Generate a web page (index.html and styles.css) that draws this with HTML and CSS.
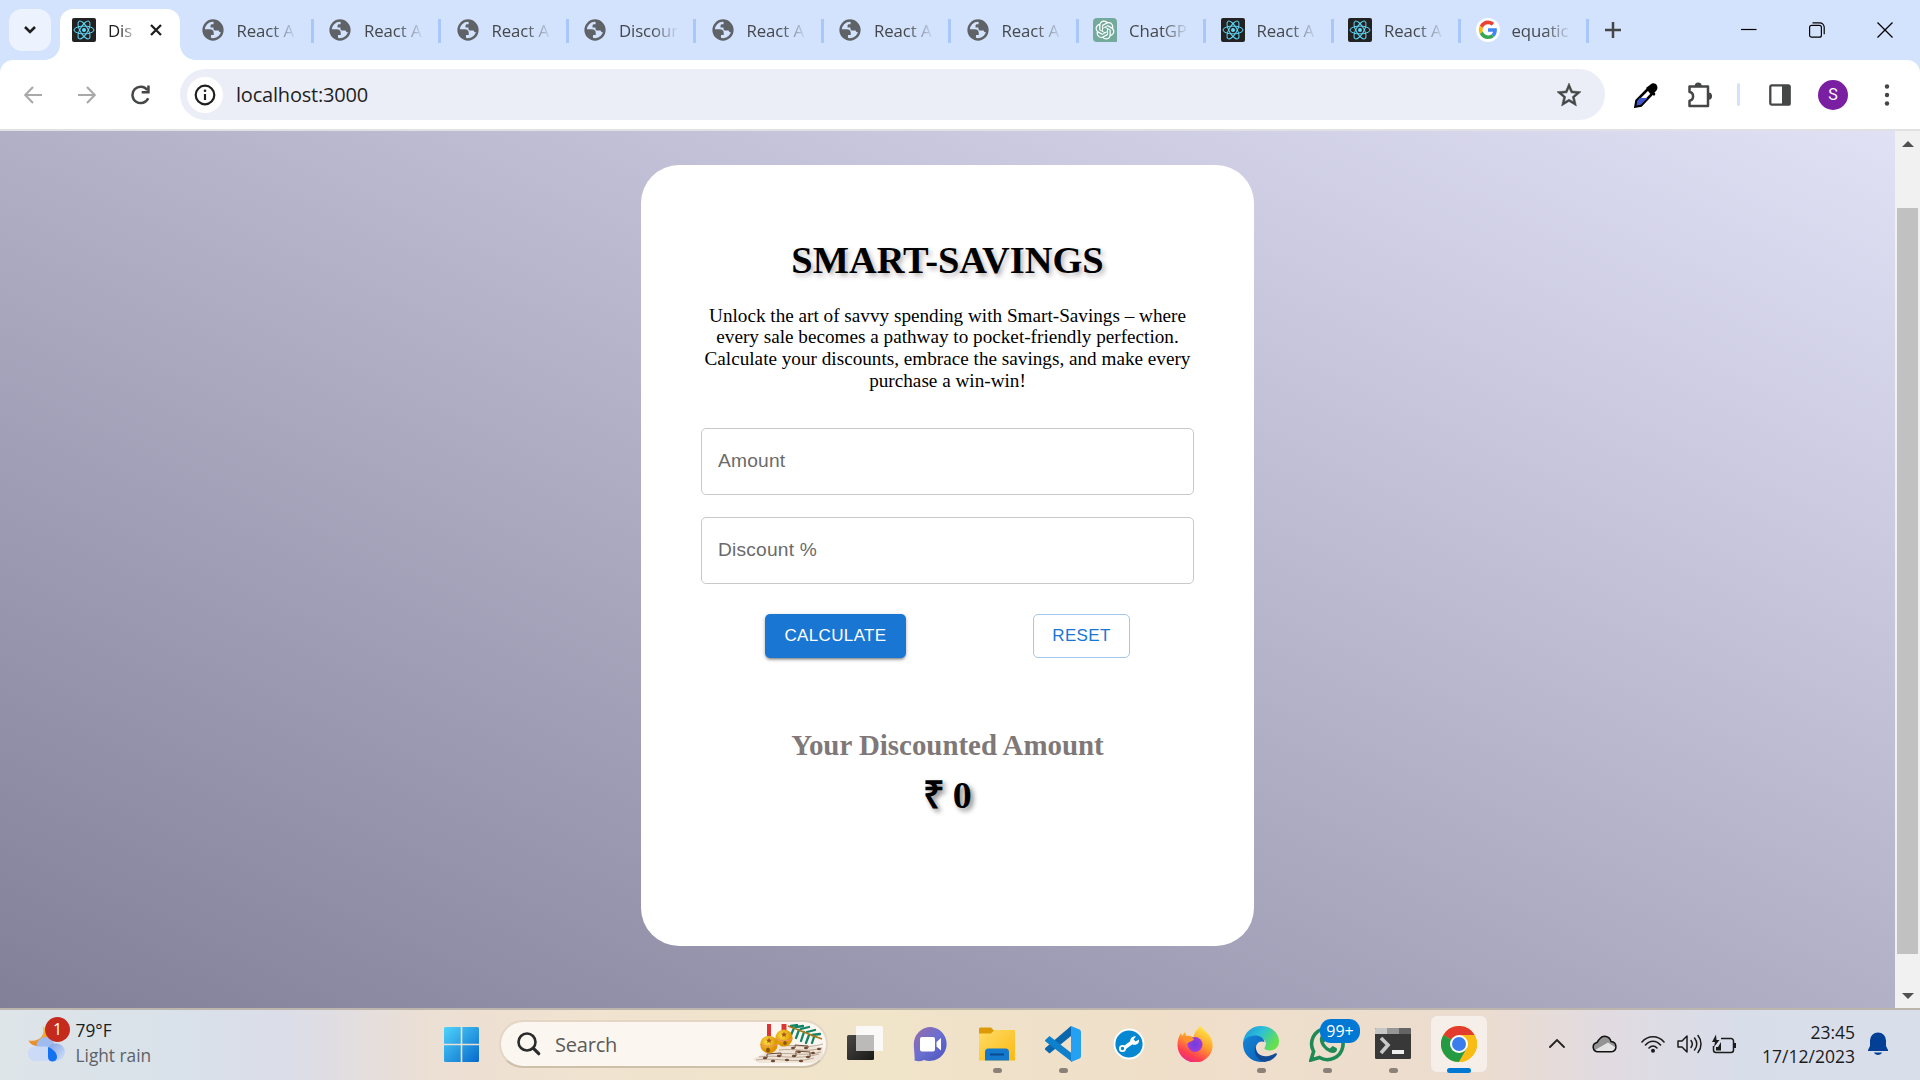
FILE: index.html
```html
<!DOCTYPE html>
<html lang="en">
<head>
<meta charset="utf-8">
<title>Discount Calculator</title>
<link rel="stylesheet" href="styles.css">
</head>
<body>
<svg class="defs" aria-hidden="true">
  <defs>
    <linearGradient id="win" x1="0" y1="0" x2="1" y2="1"><stop offset="0" stop-color="#4fd3fb"/><stop offset="1" stop-color="#0669cc"/></linearGradient>
    <linearGradient id="folder" x1="0" y1="0" x2="1" y2="1"><stop offset="0" stop-color="#ffdc68"/><stop offset="1" stop-color="#fbb911"/></linearGradient>
    <linearGradient id="chat" x1="0" y1="0" x2="1" y2="1"><stop offset="0" stop-color="#9a6ba8"/><stop offset=".5" stop-color="#6a6fd0"/><stop offset="1" stop-color="#4b53bc"/></linearGradient>
    <linearGradient id="moon" x1="0" y1="0" x2="0" y2="1"><stop offset="0" stop-color="#f8c84a"/><stop offset="1" stop-color="#e8862a"/></linearGradient>
    <linearGradient id="cloud" x1="0" y1="0" x2="1" y2="1"><stop offset="0" stop-color="#7f9fe2"/><stop offset="1" stop-color="#d3e2fa"/></linearGradient>
    <linearGradient id="edgeTop" x1="0" y1="0" x2="1" y2=".5"><stop offset="0" stop-color="#1a8fdc"/><stop offset=".5" stop-color="#2cc0d8"/><stop offset="1" stop-color="#66e04e"/></linearGradient>
    <linearGradient id="edgeBody" x1="0" y1="0" x2="1" y2="1"><stop offset="0" stop-color="#1486d8"/><stop offset="1" stop-color="#0c5fb5"/></linearGradient>
    <linearGradient id="fox" x1=".8" y1="0" x2=".3" y2="1"><stop offset="0" stop-color="#fff04a"/><stop offset=".45" stop-color="#ffa02c"/><stop offset=".8" stop-color="#ff4050"/><stop offset="1" stop-color="#e8288c"/></linearGradient>
    <radialGradient id="foxCore"><stop offset="0" stop-color="#6a3fe0"/><stop offset="1" stop-color="#a33bd6"/></radialGradient>
    <radialGradient id="bellGold" cx=".4" cy=".35"><stop offset="0" stop-color="#ffe048"/><stop offset="1" stop-color="#dd9600"/></radialGradient>
    <linearGradient id="dark" x1="0" y1="0" x2="1" y2="1"><stop offset="0" stop-color="#4a4846"/><stop offset="1" stop-color="#191919"/></linearGradient>
    <symbol id="globe" viewBox="0 0 24 24">
      <circle cx="12" cy="12" r="10.3" fill="none" stroke="#5f6368" stroke-width="2.6"/>
      <path fill="#5f6368" d="M12.5 1.5C18 2 22.500 6 22.500 12l-1.500 2.500c-1.500 0-2.500-.5-3-2h-3.500c-1.200 0-2-.8-2-2V9.300H9.300V7.200c0-1 .7-1.600 1.700-1.600h1.700zM1.800 11.200h6.700c2.800 0 4.300 1.500 4.300 3.700v2.500H9.800v5.100C5 21.500 1.800 17 1.800 12z"/>
    </symbol>
    <symbol id="react" viewBox="0 0 24 24">
      <rect width="24" height="24" rx="2" fill="#222"/>
      <g fill="none" stroke="#61dafb" stroke-width="1"><ellipse cx="12" cy="12" rx="10" ry="3.900"/><ellipse cx="12" cy="12" rx="10" ry="3.900" transform="rotate(60 12 12)"/><ellipse cx="12" cy="12" rx="10" ry="3.900" transform="rotate(120 12 12)"/></g>
      <circle cx="12" cy="12" r="2" fill="#61dafb"/>
    </symbol>
  </defs>
</svg>

<header class="tabstrip">
  <button class="tabsearch" aria-label="Search tabs"><svg width="14" height="10" viewBox="0 0 14 10"><path d="M2 2l5 5 5-5" fill="none" stroke="#1f1f1f" stroke-width="2.600"/></svg></button>
  <div class="tab tab-active"><svg class="favicon"><use href="#react"/></svg><span class="tab-title">Dis</span><svg class="close" width="12" height="12" viewBox="0 0 12 12"><path d="M1 1l10 10M11 1L1 11" stroke="#1f1f1f" stroke-width="2.300"/></svg></div>
  <div class="tabs">
    <div class="tab"><svg class="favicon globe"><use href="#globe"/></svg><span class="tab-title">React A</span></div>
    <div class="tab"><svg class="favicon globe"><use href="#globe"/></svg><span class="tab-title">React A</span></div>
    <div class="tab"><svg class="favicon globe"><use href="#globe"/></svg><span class="tab-title">React A</span></div>
    <div class="tab"><svg class="favicon globe"><use href="#globe"/></svg><span class="tab-title">Discour</span></div>
    <div class="tab"><svg class="favicon globe"><use href="#globe"/></svg><span class="tab-title">React A</span></div>
    <div class="tab"><svg class="favicon globe"><use href="#globe"/></svg><span class="tab-title">React A</span></div>
    <div class="tab"><svg class="favicon globe"><use href="#globe"/></svg><span class="tab-title">React A</span></div>
    <div class="tab"><svg class="favicon" viewBox="0 0 24 24"><path d="M4 0h16a4 4 0 0 1 4 4v20H4a4 4 0 0 1-4-4V4a4 4 0 0 1 4-4z" fill="#74aa9c"/><path transform="translate(2.500 2.500) scale(.79)" fill="#fff" d="M22.2819 9.8211a5.9847 5.9847 0 0 0-.5157-4.9108 6.0462 6.0462 0 0 0-6.5098-2.9A6.0651 6.0651 0 0 0 4.9807 4.1818a5.9847 5.9847 0 0 0-3.9977 2.9 6.0462 6.0462 0 0 0 .7427 7.0966 5.98 5.98 0 0 0 .511 4.9107 6.051 6.051 0 0 0 6.5146 2.9001A5.9847 5.9847 0 0 0 13.2599 24a6.0557 6.0557 0 0 0 5.7718-4.2058 5.9894 5.9894 0 0 0 3.9977-2.9001 6.0557 6.0557 0 0 0-.7475-7.0729zm-9.022 12.6081a4.4755 4.4755 0 0 1-2.8764-1.0408l.1419-.0804 4.7783-2.7582a.7948.7948 0 0 0 .3927-.6813v-6.7369l2.02 1.1686a.071.071 0 0 1 .038.052v5.5826a4.504 4.504 0 0 1-4.4945 4.4944zm-9.6607-4.1254a4.4708 4.4708 0 0 1-.5346-3.0137l.142.0852 4.783 2.7582a.7712.7712 0 0 0 .7806 0l5.8428-3.3685v2.3324a.0804.0804 0 0 1-.0332.0615L9.74 19.9502a4.4992 4.4992 0 0 1-6.1408-1.6464zM2.3408 7.8956a4.485 4.485 0 0 1 2.3655-1.9728V11.6a.7664.7664 0 0 0 .3879.6765l5.8144 3.3543-2.0201 1.1685a.0757.0757 0 0 1-.071 0l-4.8303-2.7865A4.504 4.504 0 0 1 2.3408 7.872zm16.5963 3.8558L13.1038 8.364 15.1192 7.2a.0757.0757 0 0 1 .071 0l4.8303 2.7913a4.4944 4.4944 0 0 1-.6765 8.1042v-5.6772a.79.79 0 0 0-.407-.667zm2.0107-3.0231l-.142-.0852-4.7735-2.7818a.7759.7759 0 0 0-.7854 0L9.409 9.2297V6.8974a.0662.0662 0 0 1 .0284-.0615l4.8303-2.7866a4.4992 4.4992 0 0 1 6.6802 4.66zM8.3065 12.863l-2.02-1.1638a.0804.0804 0 0 1-.038-.0567V6.0742a4.4992 4.4992 0 0 1 7.3757-3.4537l-.142.0805L8.704 5.459a.7948.7948 0 0 0-.3927.6813zm1.0976-2.3654l2.602-1.4998 2.6069 1.4998v2.9994l-2.5974 1.4997-2.6067-1.4997Z"/></svg><span class="tab-title">ChatGP</span></div>
    <div class="tab"><svg class="favicon"><use href="#react"/></svg><span class="tab-title">React A</span></div>
    <div class="tab"><svg class="favicon"><use href="#react"/></svg><span class="tab-title">React A</span></div>
    <div class="tab"><svg class="favicon" viewBox="0 0 24 24"><circle cx="12" cy="12" r="12" fill="#fff"/><g transform="translate(2.800 2.600) scale(.385)"><path fill="#EA4335" d="M24 9.500c3.540 0 6.710 1.220 9.210 3.600l6.850-6.850C35.900 2.380 30.470 0 24 0 14.620 0 6.510 5.380 2.560 13.220l7.980 6.190C12.430 13.720 17.740 9.500 24 9.500z"/><path fill="#4285F4" d="M46.980 24.550c0-1.570-.15-3.090-.38-4.550H24v9.020h12.940c-.58 2.960-2.260 5.480-4.780 7.180l7.730 6c4.510-4.180 7.090-10.360 7.090-17.650z"/><path fill="#FBBC05" d="M10.530 28.590A14.500 14.500 0 0 1 9.770 24c0-1.600.27-3.140.76-4.590l-7.980-6.190A23.900 23.900 0 0 0 0 24c0 3.880.92 7.540 2.560 10.780z"/><path fill="#34A853" d="M24 48c6.480 0 11.930-2.130 15.890-5.810l-7.730-6C30 37.640 27.240 38.490 24 38.490c-6.260 0-11.570-4.220-13.470-9.910l-7.980 6.190C6.510 42.620 14.620 48 24 48z"/></g></svg><span class="tab-title">equatic</span></div>
  </div>
  <svg class="newtab" width="16" height="16" viewBox="0 0 16 16"><path d="M8 0v16M0 8h16" stroke="#444746" stroke-width="2.500"/></svg>
  <div class="window-controls">
    <svg width="16" height="16" viewBox="0 0 16 16"><path d="M0 7.500h15.500" stroke="#000" stroke-width="1.200"/></svg>
    <svg width="16" height="16" viewBox="0 0 16 16"><g fill="none" stroke="#000" stroke-width="1.200"><rect x=".6" y="3.400" width="11.800" height="11.800" rx="2"/><path d="M3.500.8h7.200a4.500 4.500 0 0 1 4.500 4.500v7"/></g></svg>
    <svg width="16" height="16" viewBox="0 0 16 16"><path d="M.5.5l15 15M15.500.5l-15 15" stroke="#000" stroke-width="1.300"/></svg>
  </div>
</header>

<nav class="toolbar-wrap">
 <div class="toolbar">
  <svg class="nav-icon" width="18" height="18" viewBox="0 0 18 18"><path d="M18 9H1.500M9 1L1.200 9 9 17" fill="none" stroke="#a9a9a9" stroke-width="2.100"/></svg>
  <svg class="nav-icon" width="18" height="18" viewBox="0 0 18 18"><path d="M0 9h16.500M9 1l7.800 8L9 17" fill="none" stroke="#a9a9a9" stroke-width="2.100"/></svg>
  <svg class="nav-icon reload" width="20" height="20" viewBox="0 0 20 20"><path d="M17.200 13.200A8.200 8.200 0 1 1 16.300 5" fill="none" stroke="#444746" stroke-width="2.500"/><path d="M18.700.5v8h-8V6h5.500V.5z" fill="#444746"/></svg>
  <div class="omnibox">
    <span class="site-info"><svg width="22" height="22" viewBox="0 0 22 22"><circle cx="11" cy="11" r="9.300" fill="none" stroke="#1f1f1f" stroke-width="2.200"/><path d="M11 10v6" stroke="#1f1f1f" stroke-width="2.200"/><circle cx="11" cy="6.800" r="1.300" fill="#1f1f1f"/></svg></span>
    <span class="url">localhost:3000</span>
    <svg width="24" height="24" viewBox="0 0 24 24"><path fill="#444746" stroke="#444746" stroke-width=".5" d="M24 8.740l-8.630-.74L12 0 8.630 8.010 0 8.740l6.550 5.680L4.580 23 12 18.450 19.420 23l-1.960-8.580L24 8.740zm-12 7.410l-4.510 2.720 1.200-5.130-3.980-3.450 5.250-.46L12 4.980l2.050 4.840 5.250.46-3.980 3.450 1.200 5.130L12 16.150z"/></svg>
  </div>
  <svg class="ext pipette" width="24" height="26" viewBox="0 0 24 26"><path d="M14 7L2.500 18.500 1.500 24.500 7 23.500 18 12z" fill="#fff" stroke="#000" stroke-width="2.600"/><path d="M5.500 16h8l-6.500 6.500-4.500 1 .8-4.500z" fill="#3c55c8"/><path d="M12 6l8 8 1.500-2-1-1.500c3-2 3.500-5 2.500-7C21.500.8 18 .5 16 3l-1.500 1z" fill="#000"/></svg>
  <svg class="ext puzzle" width="25" height="26" viewBox="0 0 25 26"><path d="M2.500 4.500h18.500v19.500H2.500v-5.200c4.800-.7 4.800-8.200 0-8.900z" fill="none" stroke="#444746" stroke-width="2.500" stroke-linejoin="round"/><path d="M7.700 4a3.500 3.500 0 0 1 7 0zM21.500 10.500a3.600 3.600 0 0 1 0 7.200z" fill="#444746"/></svg>
  <i class="divider"></i>
  <svg class="ext panel" width="22" height="22" viewBox="0 0 22 22"><rect x="1.300" y="1.300" width="19.400" height="19.400" rx="1.500" fill="none" stroke="#444746" stroke-width="2.300"/><path d="M13 1h8v20h-8z" fill="#444746"/></svg>
  <span class="avatar">S</span>
  <svg class="ext dots" width="6" height="22" viewBox="0 0 6 22"><g fill="#444746"><circle cx="3" cy="2.500" r="2.200"/><circle cx="3" cy="11" r="2.200"/><circle cx="3" cy="19.500" r="2.200"/></g></svg>
 </div>
</nav>

<div class="viewport">
  <main class="page">
    <section class="card">
      <h1>SMART-SAVINGS</h1>
      <p class="intro">Unlock the art of savvy spending with Smart-Savings – where every sale becomes a pathway to pocket-friendly perfection. Calculate your discounts, embrace the savings, and make every purchase a win-win!</p>
      <div class="field">Amount</div>
      <div class="field">Discount %</div>
      <div class="actions"><button class="btn primary">CALCULATE</button><button class="btn outlined">RESET</button></div>
      <h2>Your Discounted Amount</h2>
      <div class="result">₹ 0</div>
    </section>
  </main>
  <aside class="scrollbar">
    <svg width="12" height="6" viewBox="0 0 12 6"><path d="M0 6l6-6 6 6z" fill="#505050"/></svg>
    <div class="track"><div class="thumb"></div></div>
    <svg width="12" height="6" viewBox="0 0 12 6"><path d="M0 0l6 6 6-6z" fill="#505050"/></svg>
  </aside>
</div>

<footer class="taskbar">
  <div class="weather">
    <span class="weather-icon"><svg width="38" height="38" viewBox="0 0 38 38"><path d="M14.500 1c3 9-2 16-14 14.500C4 24 17 22 19.500 13 20.500 8 18 3 14.500 1z" fill="url(#moon)"/><circle cx="17.500" cy="21" r="9" fill="#9fbbef"/><circle cx="28" cy="27" r="8.800" fill="url(#cloud)"/><path d="M7 21.500h10.500c3 0 5 2 6 5v9.500H7a7.200 7.200 0 0 1 0-14.500z" fill="#cbdaf6"/><path d="M20 22v10c0 6 9 6 9 0 0-4-4-8-9-10z" fill="#1272f2"/></svg><b class="badge-red">1</b></span>
    <span class="weather-text"><span>79°F</span><span class="muted">Light rain</span></span>
  </div>
  <div class="center">
    <svg class="start" width="35" height="35" viewBox="0 0 35 35"><path fill="url(#win)" d="M1.500 0H16.700v16.700H0V1.500A1.500 1.500 0 0 1 1.500 0zM18.300 0h15.200A1.500 1.500 0 0 1 35 1.500v15.200H18.300zM0 18.300h16.700V35H1.500A1.500 1.500 0 0 1 0 33.500zM18.300 18.300H35v15.200a1.500 1.500 0 0 1-1.500 1.500H18.300z"/></svg>
    <div class="search">
      <svg width="24" height="24" viewBox="0 0 24 24"><circle cx="10" cy="10" r="8.500" fill="none" stroke="#2b2b2b" stroke-width="2.600"/><path d="M16.200 16.200l5.500 5.500" stroke="#2b2b2b" stroke-width="3.200" stroke-linecap="round"/></svg>
      <span>Search</span>
      <svg class="art" width="72" height="40" viewBox="0 0 72 40"><path d="M0 35l28-14 42 2v10l-10 6H6z" fill="#efe5d8"/>
        <g stroke="#a68d7a" stroke-width=".7" fill="none"><path d="M3 36c22-3 38 4 58-2M6 33c20-3 36 4 60-3M26 26c16-2 26 3 43-2M28 22c16-2 26 3 42-2M24 30c16-2 26 3 44-2"/></g>
        <g fill="#6e4a35"><ellipse cx="12" cy="34" rx="2.200" ry="1.200"/><ellipse cx="20" cy="37" rx="2.200" ry="1.200"/><ellipse cx="26" cy="32" rx="2.200" ry="1.200"/><ellipse cx="34" cy="36" rx="2.200" ry="1.200"/><ellipse cx="41" cy="32" rx="2.200" ry="1.200"/><ellipse cx="48" cy="37" rx="2.200" ry="1.200"/><ellipse cx="55" cy="33" rx="2.200" ry="1.200"/><ellipse cx="40" cy="24" rx="2" ry="1.200"/><ellipse cx="46" cy="28" rx="2" ry="1.200"/><ellipse cx="53" cy="24" rx="2" ry="1.200"/><ellipse cx="60" cy="29" rx="2" ry="1.200"/><ellipse cx="66" cy="25" rx="2" ry="1.200"/></g>
        <g stroke="#6e4a35" stroke-width="1" fill="none"><path d="M14 34v-4l14-1v3M43 32v-5l14 1v5M42 24v-3l13 1v2"/></g>
        <g stroke="#118466" stroke-width="2.300" stroke-linecap="round"><path d="M41 4l-3 7M46 6l-3 8M51 8l-3 9M56 11l-3 8M61 13l-2 6M43 3l7-1M48 5l8-2M54 8l8-2M59 11l8-1M38 2l6-1"/></g><path d="M35 2c12 4 22 9 34 13" stroke="#a9791c" stroke-width="1.700" fill="none"/>
        <path d="M14 0h4v12h-4zM28.500 0h5v7h-5z" fill="#dc3434"/><circle cx="31" cy="14" r="8.600" fill="url(#bellGold)"/><circle cx="16" cy="20.500" r="8.800" fill="url(#bellGold)"/>
        <path d="M7.500 20.500c5 2 12 2 17 0M22.500 15c5 2 12 2 17 0" stroke="#ee8e62" stroke-width="1.100" fill="none"/><path d="M16 13.500l.8 2 2.200.2-1.600 1.500.4 2.100-1.800-1.200-1.800 1.200.4-2.100-1.600-1.500 2.200-.2zM31 7.500l.8 2 2.200.2-1.600 1.500.4 2.100-1.800-1.200-1.800 1.200.4-2.100-1.600-1.500 2.200-.2z" fill="#a35a16"/><ellipse cx="15" cy="26" rx="2" ry="2.500" fill="#8a5510"/><ellipse cx="32" cy="19" rx="1.800" ry="2.100" fill="#8a5510"/>
      </svg>
    </div>
    <div class="apps">
      <div class="app"><svg width="36" height="36" viewBox="0 0 36 36"><rect x="0" y="9" width="27" height="25" rx="1.500" fill="url(#dark)"/><rect x="9" y="0" width="27" height="25" rx="1" fill="#fafafa" opacity=".94"/><path d="M9 9h18v16H9z" fill="#bcbab8"/></svg></div>
      <div class="app"><svg width="36" height="36" viewBox="0 0 36 36"><path d="M18 1a17 17 0 1 1-7 33c-3 1.500-6 1.500-9.500.6C2 30 .8 24 .8 18A17 17 0 0 1 18 1z" fill="url(#chat)"/><rect x="7" y="11" width="15" height="14.500" rx="2" fill="#fff"/><path d="M23.500 16l4.500-4v12.500l-4.500-4z" fill="#fff"/></svg></div>
      <div class="app running"><svg width="36" height="36" viewBox="0 0 36 36"><path d="M0 3a1.500 1.500 0 0 1 1.500-1.500H12L15.500 5 12 8H0z" fill="#dd9a07"/><path d="M0 7.500h12L15.500 4H36v30.500H0z" fill="url(#folder)"/><path d="M6 34.500V26a3.500 3.500 0 0 1 3.500-3.500h17A3.500 3.500 0 0 1 30 26v8.500z" fill="#1379cc"/><path d="M11 28.500h14" stroke="#084c8f" stroke-width="2"/></svg></div>
      <div class="app running"><svg width="36" height="36" viewBox="0 0 36 36"><path d="M26 0v10L4.500 27.500.5 24c-.7-.7-.7-1.500 0-2.200z" fill="#0b67ad"/><path d="M.5 13.700L4.500 10 27 27.500V36L.5 15.500c-.7-.6-.7-1.200 0-1.800z" fill="#0f80cc"/><path d="M26 0l8.500 3.500Q36 4 36 6v24q0 2-1.500 2.500L26 36z" fill="#26a0f2"/></svg></div>
      <div class="app"><svg width="32" height="32" viewBox="0 0 32 32"><circle cx="16" cy="16" r="14.500" fill="#0588d1" stroke="#fff" stroke-width="1.800"/><path d="M10.500 20.500L20 13.500" stroke="#fff" stroke-width="3.800"/><circle cx="9.500" cy="20.500" r="2.600" fill="#0588d1" stroke="#fff" stroke-width="1.800"/><path d="M26 11.500a4.500 4.500 0 0 1-8.700 2.200 4.500 4.500 0 0 1 5.700-5.200l-2.500 2.700 2 2.300z" fill="#fff"/></svg></div>
      <div class="app"><svg width="36" height="36" viewBox="0 0 36 36"><path d="M24 0c1 3 5 5 8 9 3 4 4 8 3.500 12.500A17.600 17.600 0 0 1 .5 20C.3 14 2 10 4 7l1 3 3-4 1.500 4c3-.5 5 0 7 1.500 1-6 4-9 7.500-11.500z" fill="url(#fox)"/><circle cx="18" cy="18.500" r="7.500" fill="url(#foxCore)"/><path d="M5 10.500c4-1 8-.5 12 2.500-1 3-5 2-6.500 4.500C8 16 6 14 5 10.500z" fill="#ff9228"/></svg></div>
      <div class="app running"><svg width="36" height="36" viewBox="0 0 36 36"><path d="M0 17C1 6 9 0 18 0c10 0 18 7 18 15 0 6-4 9.500-9.500 9.500-4 0-6-1.500-4.500-3.500 3-5-1-9.500-8-9.500C7 11.500 2 14 0 20z" fill="url(#edgeTop)"/><path d="M0 18c.5-5 6-8.500 12-8.500 5 0 9 2.500 9.500 6.500-5-2-9.500 2-8.500 8 1 6 5 10 9 11.500C9.500 38 0 29 0 18z" fill="url(#edgeBody)"/><path d="M13 20c-1 9 8 13.500 19 7.500 1.500-.7 2.400.4 1.600 1.500C31 33 27 35.300 21.500 36 14 34 9.500 26 13 20z" fill="#124a94"/></svg></div>
      <div class="app running"><svg width="36" height="36" viewBox="0 0 36 36"><path d="M2 34l2.600-8.500A15.700 15.700 0 1 1 10.500 31.500z" fill="none" stroke="#1d8a57" stroke-width="3.600"/><path d="M12.500 9.500c-5 4 2 16.500 11.500 17.500 3 0 5-3 3.500-5l-4-2-2.500 2.500c-3-1-5-3.500-6-6l2-2.500-2-4.500z" fill="#1d8a57"/></svg><b class="badge-blue">99+</b></div>
      <div class="app running"><svg width="36" height="32" viewBox="0 0 36 32"><rect width="36" height="31" rx="1.500" fill="#383838"/><path d="M0 1.500A1.500 1.500 0 0 1 1.500 0H12v6H0z" fill="#c7c7c7"/><path d="M12 0h12v6H12z" fill="#969696"/><path d="M24 0h10.500A1.500 1.500 0 0 1 36 1.500V6H24z" fill="#646464"/><path d="M6 10l7 7-7 8" fill="none" stroke="#c8c8c8" stroke-width="3.600"/><rect x="17" y="22" width="12" height="4" fill="#eee"/></svg></div>
      <div class="app running active"><svg width="36" height="36" viewBox="0 0 36 36"><circle cx="18" cy="18" r="18" fill="#f9bc15"/><path d="M18 18L2.400 9A18 18 0 0 1 33.600 9z" fill="#e33b2e"/><path d="M2.400 9a18 18 0 0 0 15.600 27l7.800-13.500L18 18z" fill="#249b43"/><path d="M18 9h15.600A18 18 0 0 1 18 36l7.800-13.500z" fill="#f9bc15"/><circle cx="18" cy="18" r="9" fill="#fff"/><circle cx="18" cy="18" r="7" fill="#3b7ded"/></svg></div>
    </div>
  </div>
  <div class="tray">
    <svg width="16" height="9" viewBox="0 0 16 9"><path d="M1 8l7-7 7 7" fill="none" stroke="#222" stroke-width="1.800" stroke-linecap="round"/></svg>
    <svg class="t-cloud" width="25" height="18" viewBox="0 0 25 18"><path d="M6 16.700C.3 16.700-.7 9 5 7.500 6.500 5 7 4.500 8 3.500c3-3.500 9.500-3 11 3 6.500.5 6.500 10.200.5 10.200z" fill="#949494"/><path d="M3 15l13-7.500 7.500 5-3 3.500-3 .5H5z" fill="#e3e3e3"/><path d="M6 16.700C.3 16.700-.7 9 5 7.500 6.500 5 7 4.500 8 3.500c3-3.500 9.500-3 11 3 6.500.5 6.500 10.200.5 10.200z" fill="none" stroke="#111" stroke-width="1.500"/></svg>
    <svg class="t-wifi" width="24" height="18" viewBox="0 0 24 18"><g fill="none" stroke="#1b1b1b" stroke-width="1.600" stroke-linecap="round"><path d="M1 7c6-7 16-7 22 0M4.500 10c4.500-5 10.500-5 15 0M8 13c2.500-2.700 5.500-2.700 8 0"/></g><circle cx="12" cy="15.700" r="2" fill="#1b1b1b"/></svg>
    <svg class="t-sound" width="25" height="20" viewBox="0 0 25 20"><g fill="none" stroke="#1b1b1b" stroke-width="1.500" stroke-linecap="round" stroke-linejoin="round"><path d="M1 7h4l5-5v16l-5-5H1zM14 6.500c1.500 2 1.500 5 0 7M17.500 4c3 3.500 3 8.500 0 12M21 1.500c4 5 4 12 0 17"/></g></svg>
    <svg class="t-bat" width="25" height="20" viewBox="0 0 25 20"><path d="M9 4.500h10a2.500 2.500 0 0 1 2.500 2.500v9a2.500 2.500 0 0 1-2.500 2.500H4A2.500 2.500 0 0 1 1.500 16v-4" fill="none" stroke="#1b1b1b" stroke-width="1.500"/><path d="M22 9h2v5h-2zM4 .5L0 8h3l-1 5 5.500-7H4.500zM4 13h2l3-5v8.500H4z" fill="#1b1b1b"/></svg>
    <div class="clock"><span>23:45</span><span>17/12/2023</span></div>
    <svg class="t-bell" width="20" height="24" viewBox="0 0 20 24"><path d="M10 .5a8 8 0 0 0-8 8V14L0 18v1h20v-1l-2-4V8.500a8 8 0 0 0-8-8zM6 20.500h8c-1 3.300-7 3.300-8 0z" fill="#033f94"/></svg>
  </div>
</footer>
</body>
</html>
```
FILE: styles.css
```css
* { box-sizing: border-box; }
body { margin: 0; width: 1920px; height: 1080px; overflow: hidden; display: flex; flex-direction: column; font-family: "Open Sans", "Noto Sans", sans-serif; }
svg { display: block; flex: none; }
button { border: 0; padding: 0; font: inherit; }
.defs { position: absolute; width: 0; height: 0; }

/* Tab strip */
.tabstrip { height: 60px; flex: none; background: #d3e3fd; display: flex; align-items: flex-start; padding-left: 9px; }
.tabsearch { width: 42px; height: 42px; margin-top: 9px; border-radius: 13px; background: #ecf3fe; display: flex; align-items: center; justify-content: center; }
.tab { display: flex; align-items: center; height: 42px; margin-top: 9px; width: 127.500px; padding-left: 14.500px; border-right: 3px solid transparent; border-image: linear-gradient(transparent 10px, #a8c7fa 10px, #a8c7fa 34px, transparent 34px) 0 3 0 0; }
.favicon { width: 24px; height: 24px; }
.favicon.globe { padding: 1px; }
.tab-title { width: 60px; margin-left: 12px; white-space: nowrap; font-size: 16.800px; color: #45484b; line-height: 24px; padding-top: 2px; letter-spacing: -.1px; mask-image: linear-gradient(90deg, #000 55%, transparent); }
.tab-active { position: relative; width: 120px; height: 51px; margin-left: 9px; padding: 0 0 9px 12px; border: 0; border-radius: 13px 13px 0 0; background: #fff; }
.tab-active .tab-title { width: 29px; color: #1f1f1f; mask-image: linear-gradient(90deg, #000 40%, transparent); }
.tab-active .close { margin-left: 13px; }
.tab-active::before, .tab-active::after { content: ""; position: absolute; bottom: 0; width: 15px; height: 15px; }
.tab-active::before { left: -15px; background: radial-gradient(circle at 0 0, transparent 14.500px, #fff 15px); }
.tab-active::after { right: -15px; background: radial-gradient(circle at 100% 0, transparent 14.500px, #fff 15px); }
.tabs { display: flex; margin-left: 6px; }
.newtab { margin: 22px 0 0 16px; }
.window-controls { display: flex; gap: 52px; margin: 22px 27px 0 auto; }

/* Toolbar */
.toolbar-wrap { height: 71px; flex: none; background: #d3e3fd; }
.toolbar { height: 71px; background: #fff; border-bottom: 2px solid #e0e1e2; border-radius: 13px 13px 0 0; display: flex; align-items: center; padding: 0 30px 0 24px; }
.nav-icon { margin-right: 36px; }
.reload { margin-left: -1px; }
.omnibox { width: 1425px; height: 51px; margin-left: -7px; border-radius: 26px; background: #eceef7; display: flex; align-items: center; padding: 0 24px 0 7px; }
.site-info { width: 36px; height: 36px; border-radius: 50%; background: #fff; display: flex; align-items: center; justify-content: center; }
.url { flex: 1; margin-left: 13px; font-size: 20px; color: #1f1f1f; letter-spacing: -.2px; }
.pipette { margin-left: 29px; }
.puzzle { margin-left: 29px; }
.divider { width: 3px; height: 23px; border-radius: 2px; background: #d3e3fd; margin-left: 25px; }
.panel { margin-left: 29px; }
.avatar { width: 30px; height: 30px; margin-left: 27px; border-radius: 50%; background: #7b1fa2; color: #fff; font: 16px/30px Roboto, sans-serif; text-align: center; }
.dots { margin-left: auto; }

/* Page */
.viewport { height: 877px; flex: none; display: flex; }
.page { width: 1895px; background: linear-gradient(to top right, #827f98, #e1e1f6); display: flex; justify-content: center; align-items: flex-start; padding-top: 34px; }
.card { width: 613px; height: 781px; padding: 61px 60px; border-radius: 38px; background: #fff; text-align: center; font-family: "Liberation Serif", serif; color: #000; }
h1 { margin: 10.500px 0 0; font-size: 38.400px; line-height: 46px; text-shadow: 2.500px 2.500px 5px #b9b2b2; }
.intro { margin: 22px -10px 0; padding: 0 10px; font-size: 19.200px; line-height: 21.800px; }
.field { height: 67px; border: 1px solid #c9c9c9; border-radius: 5px; margin-top: 22px; padding-left: 16px; text-align: left; font: 19.200px/63px "Liberation Sans", sans-serif; letter-spacing: .19px; color: #6a6a6a; }
.intro + .field { margin-top: 36px; }
.actions { display: flex; padding-left: 64px; gap: 127px; margin-top: 30px; }
.btn { height: 44px; border-radius: 5px; font: 17px/42px "Liberation Sans", sans-serif; letter-spacing: .35px; }
.primary { width: 141px; background: #1976d2; color: #fff; box-shadow: 0 3px 2px -2px rgba(0,0,0,.25), 0 2px 3px rgba(0,0,0,.2), 0 1px 5px rgba(0,0,0,.15); }
.outlined { width: 97px; border: 1px solid #a3c8ed; background: #fff; color: #1976d2; }
h2 { margin: 70px 0 0; font-size: 28.900px; line-height: 34px; color: #807878; }
.result { margin-top: 10px; font-size: 38px; line-height: 46px; font-weight: 700; word-spacing: -2px; text-shadow: 3px 3px 5px #8a8a8a; }

.scrollbar { width: 25px; background: #f1f1f1; display: flex; flex-direction: column; align-items: center; padding: 10px 0 9px; }
.track { flex: 1; width: 21px; padding-top: 61px; }
.thumb { height: 746px; background: #c1c1c1; }

/* Taskbar */
.taskbar { height: 72px; flex: none; display: flex; border-top: 2px solid #bbb5ae; background: linear-gradient(90deg, #dde5e9 0, #d9e1ea 180px, #dbdde8 290px, #ecdfd4 430px, #f0e3cf 600px, #f0e4c9 880px, #efdfc9 1150px, #ecdccf 1480px, #e1dbe0 1600px, #d8ddea 1740px, #d9dfea 1920px); }
.weather { width: 444px; display: flex; padding: 15px 0 0 28px; }
.weather-icon { position: relative; width: 38px; height: 38px; }
.badge-red { position: absolute; left: 17px; top: -8px; width: 25px; height: 25px; border-radius: 50%; background: #c42b1c; color: #fff; font: 16px/25px "Open Sans", sans-serif; text-align: center; }
.weather-text { display: flex; flex-direction: column; margin: -6px 0 0 9.500px; font-size: 17.300px; line-height: 24.500px; color: #1b1b1b; }
.muted { color: #5d6165; }
.center { width: 1048px; display: flex; align-items: flex-start; }
.start { margin-top: 17px; }
.search { width: 329px; height: 48px; margin: 10px 4px 0 20px; border: 2px solid #e3d6c5; border-bottom-color: #cdbfa8; border-radius: 24px; background: #fbf6f0; display: flex; align-items: center; padding-left: 16px; overflow: hidden; font-size: 20px; color: #5c5a58; }
.search span { margin-left: 14px; letter-spacing: -.2px; flex: 1; }
.search .art { margin-right: 1px; }
.apps { display: flex; padding-top: 6px; }
.app { position: relative; width: 66px; height: 56px; display: flex; align-items: center; justify-content: center; }
.app::after { content: none; position: absolute; bottom: -1px; left: 28.500px; width: 9px; height: 5px; border-radius: 3px; background: #8b8178; }
.running::after { content: ""; }
.active { width: 56px; margin: 0 5px; border-radius: 6px; background: #f6eee9; box-shadow: 0 0 0 1px #e8dcd3; }
.active::after { left: 16px; width: 24px; background: #0078d4; }
.badge-blue { position: absolute; left: 26px; top: 3px; width: 40px; height: 24px; border-radius: 11px; background: #0078d4; color: #fff; font: 16px/24px "Open Sans", sans-serif; text-align: center; }
.tray { flex: 1; display: flex; align-items: center; padding: 0 32px 3px 57px; }
.t-cloud { margin-left: 27px; }
.t-wifi { margin-left: 24px; }
.t-sound { margin-left: 12px; }
.t-bat { margin-left: 10px; }
.clock { flex: 1; display: flex; flex-direction: column; text-align: right; font-size: 17.500px; line-height: 24px; color: #1b1b1b; }
.t-bell { margin-left: 13px; }
```
